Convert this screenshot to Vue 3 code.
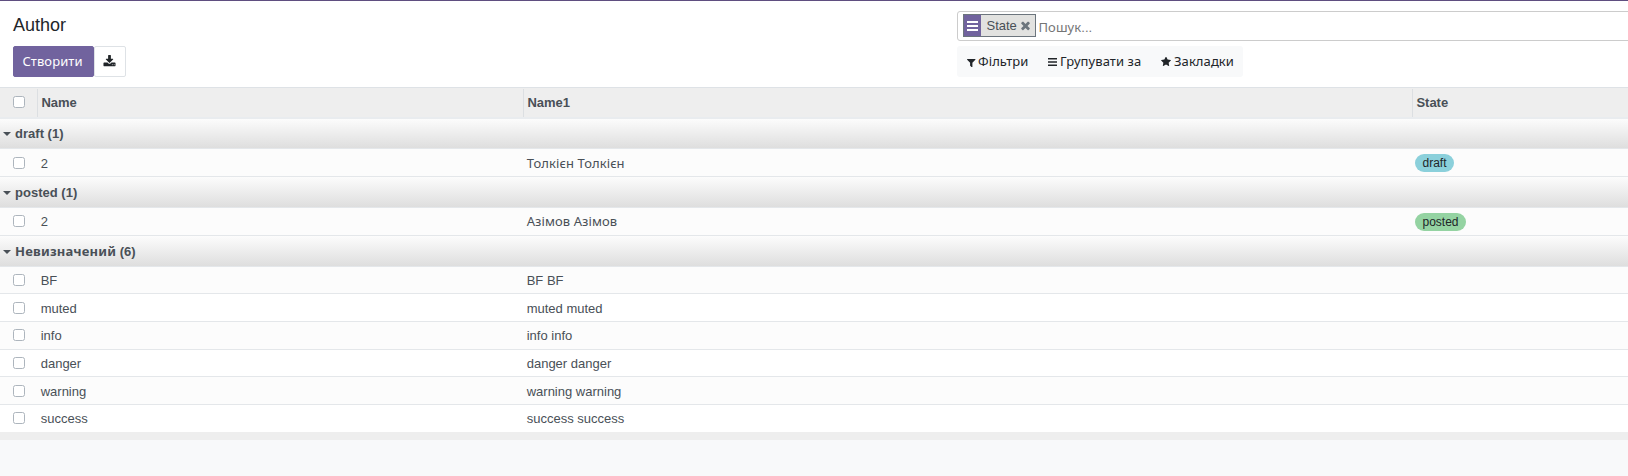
<script setup>
const groups = [
  {
    cyr: '', label: 'draft (1)', size: 'g29',
    rows: [{ name: '2', full: 'Толкієн Толкієн', cyr: true, state: 'draft', size: 'r28 low' }],
  },
  {
    cyr: '', label: 'posted (1)', size: 'g31',
    rows: [{ name: '2', full: 'Азімов Азімов', cyr: true, state: 'posted', size: 'r28' }],
  },
  {
    cyr: 'Невизначений', label: ' (6)', size: 'g31',
    rows: [
      { name: 'BF', full: 'BF BF', size: 'r27' },
      { name: 'muted', full: 'muted muted', size: 'r28 low even' },
      { name: 'info', full: 'info info', size: 'r28' },
      { name: 'danger', full: 'danger danger', size: 'r27 even' },
      { name: 'warning', full: 'warning warning', size: 'r28 low' },
      { name: 'success', full: 'success success', size: 'r28 even' },
    ],
  },
]
</script>

<template>
  <div class="page">
    <header class="panel">
      <div class="left">
        <div class="title">Author</div>
        <div class="actions">
          <button class="create cyr">Створити</button>
          <button class="export">
            <svg width="13" height="13" viewBox="0 0 1792 1792"><path d="M1344 1344q0-26-19-45t-45-19-45 19-19 45 19 45 45 19 45-19 19-45zm256 0q0-26-19-45t-45-19-45 19-19 45 19 45 45 19 45-19 19-45zm128-224v320q0 40-28 68t-68 28h-1472q-40 0-68-28t-28-68v-320q0-40 28-68t68-28h465l135 136q58 56 136 56t136-56l136-136h464q40 0 68 28t28 68zm-325-569q17 41-14 70l-448 448q-18 19-45 19t-45-19l-448-448q-31-29-14-70 17-39 59-39h256v-448q0-26 19-45t45-19h256q26 0 45 19t19 45v448h256q42 0 59 39z" /></svg>
          </button>
        </div>
      </div>
      <div class="right">
        <div class="search">
          <div class="facet">
            <span class="facet-icon"><svg width="11" height="10" viewBox="0 0 11 10"><path d="M0 0h11v2H0zM0 4h11v2H0zM0 8h11v2H0z" /></svg></span>
            <span class="facet-label">State</span>
            <svg class="facet-x" width="13" height="13" viewBox="0 0 1792 1792"><path d="M1490 1322q0 40-28 68l-136 136q-28 28-68 28t-68-28l-294-294-294 294q-28 28-68 28t-68-28l-136-136q-28-28-28-68t28-68l294-294-294-294q-28-28-28-68t28-68l136-136q28-28 68-28t68 28l294 294 294-294q28-28 68-28t68 28l136 136q28 28 28 68t-28 68l-294 294 294 294q28 28 28 68z" /></svg>
          </div>
          <span class="placeholder"><span class="cyr">Пошук</span>...</span>
        </div>
        <div class="filters">
          <span class="opt o1"><svg width="8.5" height="8.5" viewBox="186 256 1420 1408"><path d="M1595 295q17 41-14 70l-493 493v742q0 42-39 59-13 5-25 5-27 0-45-19l-256-256q-19-19-19-45v-486l-493-493q-31-29-14-70 17-39 59-39h1280q42 0 59 39z" /></svg><span class="cyr">Фільтри</span></span>
          <span class="opt o2"><svg width="9" height="8" viewBox="0 0 9 8"><path d="M0 0h9v1.6H0zM0 3.2h9v1.6H0zM0 6.4h9v1.6H0z" /></svg><span class="cyr">Групувати за</span></span>
          <span class="opt o3"><svg width="10" height="9.5" viewBox="64 96 1664 1590"><path d="M1728 647q0 22-26 48l-363 354 86 500q1 7 1 20 0 21-10.5 35.5t-30.5 14.5q-19 0-40-12l-449-236-449 236q-22 12-40 12-21 0-31.5-14.5t-10.5-35.5q0-6 2-20l86-500-364-354q-25-27-25-48 0-37 56-46l502-73 225-455q19-41 49-41t49 41l225 455 502 73q56 9 56 46z" /></svg><span class="cyr">Закладки</span></span>
        </div>
      </div>
    </header>

    <section class="list">
      <div class="row head">
        <div class="pick"><i class="box"></i></div>
        <div class="th">Name</div>
        <div class="th">Name1</div>
        <div class="th">State</div>
      </div>
      <template v-for="g in groups" :key="g.label">
        <div class="group" :class="g.size">
          <i class="caret"></i>
          <span class="glabel"><span class="cyr">{{ g.cyr }}</span>{{ g.label }}</span>
        </div>
        <div v-for="r in g.rows" :key="r.full" class="row rec" :class="r.size">
          <div class="pick"><i class="box"></i></div>
          <div class="td">{{ r.name }}</div>
          <div class="td"><span :class="{ cyr: r.cyr }">{{ r.full }}</span></div>
          <div class="state"><span v-if="r.state" class="badge" :class="r.state">{{ r.state }}</span></div>
        </div>
      </template>
      <div class="foot"></div>
    </section>
  </div>
</template>

<style>
body { margin: 0; background: #f8f9fa; overflow: hidden; }
</style>

<style scoped>
* { box-sizing: border-box; }
.page {
  width: 1628px;
  height: 476px;
  overflow: hidden;
  background: #f8f9fa;
  font: 13px/15px "Liberation Sans", Arial, sans-serif;
  color: #495057;
}
.cyr { font-family: "Noto Sans", sans-serif; line-height: 0; letter-spacing: 0.08px; }
svg { display: block; fill: currentColor; flex: none; }

.panel {
  display: flex;
  height: 87px;
  background: #fff;
  border-top: 1px solid #5f4e80;
  color: #212529;
}
.left { flex: none; width: 957px; padding: 14px 0 0 13px; }
.title { font-size: 18px; line-height: 21px; height: 31px; }
.actions { display: flex; }
button { margin: 0; padding: 0; font-size: 13px; border-radius: 2px; height: 31px; }
.create { width: 81px; padding: 0 2px 2px 0; border: 1px solid #71639e; background: #71639e; color: #fff; }
.export {
  display: flex;
  align-items: center;
  justify-content: center;
  width: 32px;
  padding-right: 1px;
  border: 1px solid #dee2e6;
  background: #fff;
  color: #212529;
}

.right { flex: none; padding-top: 10px; }
.search {
  display: flex;
  width: 690px;
  height: 30px;
  padding: 2px 5px;
  border: 1px solid #ccc;
  border-radius: 3px;
}
.facet {
  display: flex;
  width: 73px;
  height: 23px;
  border: 1px solid #6c757d;
  background: #e2e2e0;
  color: #495057;
}
.facet-icon {
  flex: none;
  width: 17px;
  padding: 6px 0 0 3px;
  background: #71639e;
  color: #fff;
}
.facet-label { flex: none; width: 38px; padding: 3px 0 0 5.5px; }
.facet-x { margin-top: 4px; color: #6c757d; }
.placeholder { margin: 6px 0 0 2.5px; color: #757575; }
.filters {
  display: flex;
  width: 286px;
  height: 31px;
  margin-top: 5px;
  padding-top: 8px;
  border-radius: 3px;
  background: #f8f9fa;
}
.opt { display: flex; white-space: nowrap; }
.opt .cyr { line-height: 15px; }
.o1 { width: 91px; padding-left: 10px; }
.o1 svg { margin: 4.5px 2.5px 0 0; }
.o2 { width: 113px; }
.o2 svg { margin: 4px 3px 0 0; }
.o3 svg { margin: 3px 3px 0 0; }

.row { display: grid; grid-template-columns: 37px 486px 889px 216px; }
.head {
  height: 32px;
  border-top: 1px solid #dee2e6;
  border-bottom: 2px solid #e9ecef;
  background: #eee;
  font-weight: 700;
}
.th { margin-top: 1px; padding: 6px 0 0 3.4px; border-left: 1px solid #dcdfe2; }
.pick { padding: 8px 0 0 13px; }
.box {
  display: block;
  width: 12px;
  height: 12px;
  border: 1px solid #adb5bd;
  border-radius: 2.5px;
  background: #fff;
}
.rec { border-top: 1px solid #e4e7ea; background: #fcfcfc; }
.even { background: #fff; }
.rec .pick { padding-top: 7px; }
.td { padding: 6px 0 0 3.7px; }
.state { padding: 5px 0 0 3px; }
.low .pick { padding-top: 8px; }
.low .td { padding-top: 7px; }
.r27 { height: 27px; }
.r28 { height: 28px; }
.g29 { height: 29px; padding-top: 7px; }
.g31 { height: 31px; padding-top: 8px; border-top: 1px solid #e4e7ea; }
.group {
  display: flex;
  background: linear-gradient(#fcfcfc, #dedede);
  font-weight: 700;
  white-space: pre;
}
.group .cyr { letter-spacing: 0.17px; }
.caret {
  width: 0;
  height: 0;
  margin: 6px 4.6px 0 2.5px;
  border: 4px solid transparent;
  border-top-color: #495057;
  border-bottom: 0;
}
.badge {
  display: block;
  width: max-content;
  height: 18px;
  padding: 0 7.5px;
  border-radius: 9px;
  font-size: 12px;
  line-height: 18px;
  color: #212529;
}
.draft { background: #8bd0db; }
.posted { background: #94d3a2; }
.foot { height: 8px; background: #eee; }
</style>
